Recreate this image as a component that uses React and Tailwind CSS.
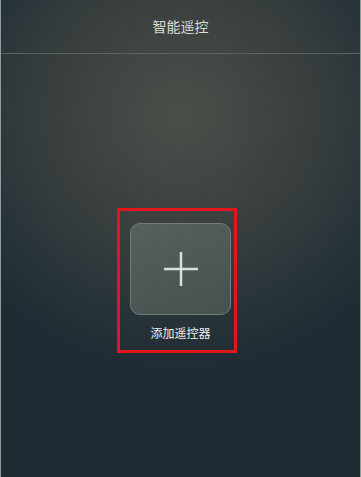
export default function App() {
  return (
    <div
      className="flex h-[477px] w-full flex-col overflow-hidden border-x border-x-[#8c9e96] bg-[radial-gradient(ellipse_75%_55%_at_50%_24%,#4b4f49_0%,#3a403e_45%,#29343a_76%,#1e2b32_100%)] font-['Noto_Sans_CJK_SC',sans-serif]"
    >
      <header className="flex h-[54px] items-center justify-center border-b border-b-[#5c625e] pb-[1px]">
        <h1 className="text-[14px] leading-none text-[#d9ddd9]">智能遥控</h1>
      </header>

      <main className="flex flex-1 justify-center pt-[154px]">
        <div className="mr-[7px] flex h-[145px] w-[120px] flex-col border-[3px] border-[#e3151d] pl-[10px] pr-[3px] pt-[12px]">
          <button
            type="button"
            className="flex h-[92px] w-[101px] items-center justify-center rounded-[10px] border border-[#727d79] bg-[linear-gradient(160deg,#55605c,#47514f)]"
          >
            <svg width="36" height="36" viewBox="0 0 36 36" fill="none">
              <path d="M18 1v34M1 18h34" stroke="#d8dfdb" strokeWidth="2.5" />
            </svg>
          </button>
          <span className="mt-[9px] text-center text-[12px] leading-[17px] text-[#eef0ee]">
            添加遥控器
          </span>
        </div>
      </main>
    </div>
  );
}
